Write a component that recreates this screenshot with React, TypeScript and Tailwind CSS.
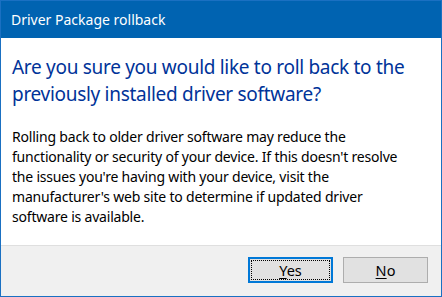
import React from "react";

export default function App() {
  const font = { fontFamily: '"Noto Sans", "Open Sans", sans-serif' };
  return (
    <div className="w-[442px] h-[297px] flex flex-col border border-[#1a70c2] bg-white overflow-hidden" style={font}>
      <div className="h-[37px] bg-[#0063b1] flex items-center pl-[10px] shrink-0">
        <span className="text-white text-[14px] leading-none tracking-[0px] mt-[1px]">Driver Package rollback</span>
      </div>
      <div className="flex-1 bg-white px-[11px] pt-[16px]">
        <div className="text-[#003399] text-[19px] leading-[27px] tracking-[-0.3px]">
          <div>Are you sure you would like to roll back to the</div>
          <div>previously installed driver software?</div>
        </div>
        <div className="mt-[19px] text-[#000] text-[14px] leading-[20px] tracking-[-0.2px]">
          <div>Rolling back to older driver software may reduce the</div>
          <div>functionality or security of your device. If this doesn't resolve</div>
          <div>the issues you're having with your device, visit the</div>
          <div>manufacturer's web site to determine if updated driver</div>
          <div>software is available.</div>
        </div>
      </div>
      <div className="h-[51px] shrink-0 bg-[#f0f0f0] border-t border-[#dfdfdf] flex justify-end items-start pt-[11px] pr-[13px] gap-[10px]">
        <button className="w-[85px] h-[26px] bg-[#e1e1e1] border-2 border-[#0078d7] flex items-center justify-center p-[1px]">
          <span className="w-full h-full border border-dotted border-black flex items-center justify-center text-[14.5px] text-black leading-none">
            <span><span className="underline underline-offset-2">Y</span>es</span>
          </span>
        </button>
        <button className="w-[85px] h-[26px] bg-[#e1e1e1] border border-[#adadad] flex items-center justify-center text-[14.5px] text-black leading-none">
          <span><span className="underline underline-offset-2">N</span>o</span>
        </button>
      </div>
    </div>
  );
}
